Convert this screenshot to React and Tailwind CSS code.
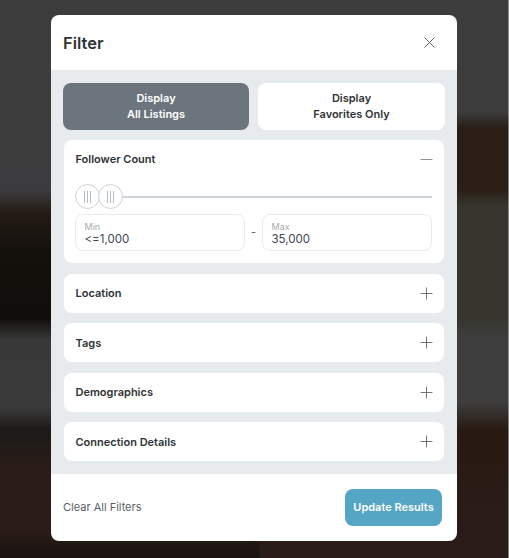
import { X, Minus, Plus } from 'lucide-react'

const SECTIONS = ['Location', 'Tags', 'Demographics', 'Connection Details']

function Handle({ className = '' }) {
  return (
    <div className={`relative w-[25px] h-[25px] shrink-0 rounded-full border border-[#ccd3d9] bg-white flex items-center justify-center gap-[2px] ${className}`}>
      <span className="w-px h-[12px] bg-[#b5bcc2]" />
      <span className="w-px h-[12px] bg-[#b5bcc2]" />
      <span className="w-px h-[12px] bg-[#b5bcc2]" />
    </div>
  )
}

function RangeInput({ label, value }) {
  return (
    <div className="flex-1 h-[37px] border border-[#e8ebee] rounded-lg pl-[8.5px] pr-[9px] pt-[7px]">
      <p className="text-[9px] leading-[10px] text-[#a8aaac]">{label}</p>
      <p className="text-[11.5px] leading-[14px] text-[#3c4650]">{value}</p>
    </div>
  )
}

export default function App() {
  return (
    <div className="min-h-screen flex justify-center pt-[15px] pr-px font-['Inter',sans-serif] [background:linear-gradient(180deg,#3c3c3c_0%,#3c3c3e_34%,#241c16_38%,#14100c_45%,#100e0b_57%,#383838_61%,#3a3a3a_73%,#1c1a18_77%,#2a1c16_84%,#2a1c16_95%,#181210_100%)_left/51%_100%_no-repeat,linear-gradient(180deg,#3c3c3c_0%,#3c3c3c_20%,#2a1e16_23%,#2a1e16_34%,#36362e_37%,#36362e_57%,#3e3e3e_61%,#3e3e3e_72%,#281a12_77%,#2a1c18_100%)_right/51%_100%_no-repeat]">
      <div className="w-[406px] h-[526px] bg-white rounded-[8px] overflow-hidden flex flex-col">
        {/* Header */}
        <div className="h-[55px] shrink-0 flex items-center justify-between pl-[12px] pr-[18px]">
          <h2 className="text-[16.5px] font-semibold text-[#2f3337] pt-[1px]">Filter</h2>
          <X size={19} strokeWidth={1.2} className="text-[#5d6368]" />
        </div>

        {/* Body */}
        <div className="flex-1 bg-[#e8ebee] px-[12px] pt-[13px]">
          <div className="flex gap-[9px] mb-[10px]">
            <button className="w-[186px] h-[47px] rounded-lg bg-[#6c757d] text-white text-[11px] font-semibold leading-[15.5px]">
              Display<br />All Listings
            </button>
            <button className="w-[187px] h-[47px] rounded-lg bg-white text-[#2f3337] text-[11px] font-semibold leading-[15.5px]">
              Display<br />Favorites Only
            </button>
          </div>

          <div className="mx-px w-[380px] h-[123px] bg-white rounded-lg pl-[11px] pr-[12px] pt-[12px] mb-[10.75px]">
            <div className="flex items-center justify-between h-[14px]">
              <span className="ml-[0.5px] text-[11px] font-semibold text-[#2f3337]">Follower Count</span>
              <Minus size={19} strokeWidth={1.1} className="text-[#7c8288] -mr-[4px]" />
            </div>
            <div className="flex items-center mt-[18px]">
              <Handle />
              <Handle className="-ml-[2px]" />
              <div className="flex-1 h-[2px] bg-[#ced4da]" />
            </div>
            <div className="flex items-center gap-[6px] mt-[5px]">
              <RangeInput label="Min" value="<=1,000" />
              <span className="text-[11px] text-[#5d6368] w-[5px]">-</span>
              <RangeInput label="Max" value="35,000" />
            </div>
          </div>

          <div className="flex flex-col gap-[10.5px]">
            {SECTIONS.map(s => (
              <div key={s} className="mx-px w-[380px] h-[39px] bg-white rounded-lg pl-[11.5px] pr-[8.5px] flex items-center justify-between">
                <span className="text-[11px] font-semibold text-[#2f3337]">{s}</span>
                <Plus size={19} strokeWidth={1} className="text-[#4d5358]" />
              </div>
            ))}
          </div>
        </div>

        {/* Footer */}
        <div className="h-[67px] shrink-0 flex items-center justify-between pl-[12px] pr-[15px]">
          <span className="text-[11px] font-normal text-[#5a5f64]">Clear All Filters</span>
          <button className="w-[97px] h-[37px] rounded-lg bg-[#55a5c5] text-white text-[11px] font-semibold">
            Update Results
          </button>
        </div>
      </div>
    </div>
  )
}
